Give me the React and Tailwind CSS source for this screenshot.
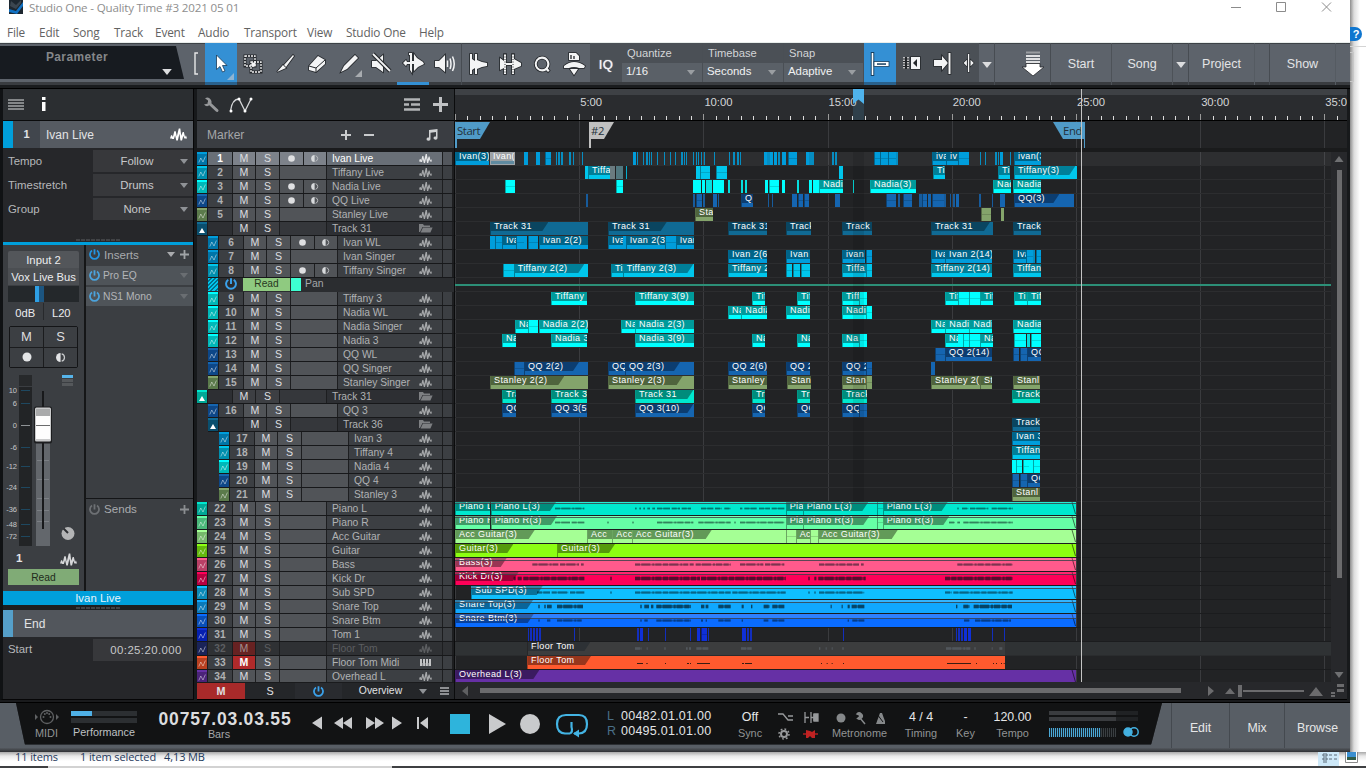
import React from "react";

/* ---------- palette: [clip body, clip label, header chip] ---------- */
const C = {
  ivan: ["#009ddb", "#006488", "#0075a8"],
  tiff: ["#00c6ec", "#007f98", "#008fae"],
  nadia: ["#00ffff", "#009a9a", "#00b8b8"],
  qq: ["#1565b0", "#0c3d70", "#0d4788"],
  stan: ["#84a46b", "#4f643d", "#5b7a4b"],
  fold: ["#106a94", "#0a4560", "#0a4f6e"],
  fold2: ["#00e8cf", "#008c7c", "#00a896"],
  pianoR: ["#66ffa6", "#3f9a66", "#4bb87a"],
  acc: ["#a5ff95", "#629a58", "#76b86b"],
  gtr: ["#8cff12", "#559a0b", "#64b80d"],
  bass: ["#ff5a8c", "#993554", "#b84066"],
  kick: ["#ff0058", "#990036", "#b80040"],
  sub: ["#0fc0ff", "#0a7299", "#0b8ab8"],
  top: ["#10a8ff", "#0a6599", "#0b79b8"],
  btm: ["#0a6cff", "#08419a", "#084eb8"],
  tom: ["#0f30d8", "#0a2090", "#0520b0"],
  mute: ["#3c3d3e", "#2d3135", "#1a2358"],
  floor: ["#ff5a2e", "#98361c", "#b84020"],
  over: ["#6630a5", "#3b1b60", "#4b2379"],
};

/* Clip positions are in thirds of a pixel from the left edge of the arrangement. */
const ROWS = [
  { n: 1, name: "Ivan Live", c: "ivan", rec: 1, sel: 1, clips: [[0, 103, "Ivan(3)"], [207, 218], [243, 255], [270, 288], [303, 306], [309, 315], [318, 324], [342, 348], [354, 357], [381, 384], [534, 543], [546, 549], [564, 567], [573, 579], [582, 585], [588, 591], [606, 609], [627, 630], [645, 648], [660, 663], [678, 684], [687, 690], [693, 696], [714, 717], [723, 726], [729, 732], [738, 741], [747, 750], [777, 780], [822, 825], [834, 840], [846, 852], [855, 858], [927, 936], [937, 945], [946, 955], [956, 966], [969, 975], [981, 993], [999, 1025], [1053, 1062], [1063, 1070], [1071, 1077], [1131, 1137], [1140, 1146], [1257, 1274], [1275, 1298], [1299, 1322], [1323, 1329], [1431, 1472, "iva"], [1473, 1510, "iv"], [1510, 1542], [1575, 1578], [1590, 1593], [1620, 1626], [1629, 1631], [1635, 1644], [1665, 1668], [1677, 1758, "ivan(3)"]] },
  { n: 2, name: "Tiffany Live", c: "tiff", clips: [[390, 399], [399, 465, "Tiffa"], [513, 516], [723, 734], [735, 764], [783, 816], [1152, 1164], [1434, 1470, "Ti"], [1629, 1665, "Ti"], [1677, 1865, "Tiffany(3)", 1858]] },
  { n: 3, name: "Nadia Live", c: "nadia", rec: 1, clips: [[150, 180], [483, 504], [714, 726], [727, 738], [741, 750], [753, 761], [763, 771], [774, 783], [784, 795], [796, 807], [819, 825], [858, 864], [870, 876], [930, 940], [941, 972], [981, 990], [1026, 1032], [1062, 1072], [1073, 1082], [1083, 1092], [1092, 1164, "Nadia"], [1194, 1197], [1245, 1383, "Nadia(3)"], [1614, 1667, "Nad"], [1674, 1758, "Nadia(3)"]] },
  { n: 4, name: "QQ Live", c: "qq", rec: 1, clips: [[393, 399], [714, 720], [723, 741], [744, 750], [774, 786], [789, 792], [858, 894, "Q"], [939, 942], [951, 954], [1011, 1026], [1029, 1045], [1046, 1062], [1140, 1155], [1293, 1323], [1329, 1335], [1344, 1371], [1392, 1400], [1401, 1417], [1419, 1428], [1431, 1466], [1467, 1473], [1485, 1488], [1494, 1500], [1503, 1512], [1572, 1578], [1611, 1614], [1635, 1650], [1677, 1857, "QQ(3)", 1810]] },
  { n: 5, name: "Stanley Live", c: "stan", clips: [[720, 774, "Stan"], [1578, 1608], [1638, 1647]] },
  { name: "Track 31", c: "fold", folder: 1, clips: [[105, 399, "Track 31", 277], [459, 717, "Track 31", 632], [819, 936, "Track 31"], [993, 1068, "Track"], [1161, 1251, "Track"], [1428, 1614, "Track 31", 1602], [1674, 1758, "Track"]] },
  { n: 6, d: 1, name: "Ivan WL", c: "ivan", rec: 1, clips: [[105, 119], [120, 141], [141, 182, "Iva"], [182, 206], [207, 217], [218, 250], [251, 399, "Ivan 2(2)"], [459, 503, "Iva"], [503, 512], [512, 630, "Ivan 2(3)"], [630, 662], [662, 717, "Ivan"]] },
  { n: 7, d: 1, name: "Ivan Singer", c: "ivan", clips: [[819, 936, "Ivan 2(6)"], [993, 1065, "Ivan"], [1161, 1231, "ivan"], [1232, 1251], [1428, 1470, "Iva"], [1470, 1611, "Ivan 2(14)"], [1674, 1713, "Iva"], [1713, 1734], [1735, 1741], [1742, 1758]] },
  { n: 8, d: 1, name: "Tiffany Singer", c: "tiff", rec: 1, clips: [[144, 176], [176, 399, "Tiffany 2(2)", 385], [468, 503, "Ti"], [503, 717, "Tiffany 2(3)", 712], [819, 936, "Tiffany 2(6)"], [993, 1011], [1014, 1035], [1038, 1065], [1161, 1233, "Tiffa"], [1233, 1251], [1428, 1611, "Tiffany 2(14)"], [1674, 1758, "Tiffany"]] },
  { auto: 1, name: "Pan", clips: [] },
  { n: 9, d: 1, name: "Tiffany 3", c: "nadia", clips: [[288, 396, "Tiffany "], [540, 717, "Tiffany 3(9)"], [891, 930, "Tif"], [1026, 1065, "Tif"], [1161, 1211, "Tiff"], [1212, 1236], [1470, 1508, "Tif"], [1509, 1542], [1543, 1575], [1575, 1614, "Tif"], [1677, 1716, "Ti"], [1716, 1758, "Tiff"]] },
  { n: 10, d: 1, name: "Nadia WL", c: "nadia", clips: [[819, 858, "Na"], [859, 936, "Nadia"], [993, 1065, "Nadia"], [1161, 1232, "Nadi"], [1233, 1251]] },
  { n: 11, d: 1, name: "Nadia Singer", c: "nadia", clips: [[180, 218, "Na"], [219, 250], [251, 399, "Nadia 2(2)"], [498, 539, "Na"], [540, 717, "Nadia 2(3)"], [1428, 1470, "Na"], [1471, 1541, "Nadia"], [1543, 1611, "Nadi"], [1674, 1758, "Nadia"]] },
  { n: 12, d: 1, name: "Nadia 3", c: "nadia", clips: [[141, 183, "Na"], [288, 396, "Nadia 3"], [540, 717, "Nadia 3(9)"], [891, 930, "Na"], [1026, 1065, "Na"], [1161, 1211, "Na"], [1212, 1236], [1470, 1508, "Na"], [1509, 1523], [1525, 1542], [1543, 1574], [1575, 1614, "Na"], [1677, 1714], [1716, 1724], [1727, 1758]] },
  { n: 13, d: 1, name: "QQ WL", c: "qq", clips: [[1440, 1470], [1470, 1611, "QQ 2(14)"], [1674, 1693], [1695, 1716], [1716, 1758, "QQ"]] },
  { n: 14, d: 1, name: "QQ Singer", c: "qq", clips: [[177, 206], [207, 399, "QQ 2(2)", 369], [459, 510, "QQ"], [510, 717, "QQ 2(3)", 672], [819, 936, "QQ 2(6)"], [993, 1065, "QQ 2"], [1161, 1232, "QQ 2"], [1233, 1251], [1428, 1440]] },
  { n: 15, d: 1, name: "Stanley Singer", c: "stan", clips: [[105, 399, "Stanley 2(2)", 325], [459, 717, "Stanley 2(3)", 680], [819, 936, "Stanley"], [996, 1068, "Stan"], [1161, 1232, "Stan"], [1233, 1251], [1428, 1575, "Stanley 2("], [1575, 1611, "St"], [1674, 1754, "Stanl"]] },
  { name: "Track 31", c: "fold2", folder: 1, clips: [[141, 183, "Tra"], [288, 396, "Track 31"], [540, 717, "Track 31", 712], [891, 930, "Tra"], [1026, 1065, "Tra"], [1161, 1236, "Track"], [1671, 1754, "Track"]] },
  { n: 16, d: 1, name: "QQ 3", c: "qq", clips: [[141, 183, "QQ"], [288, 396, "QQ 3(5)"], [540, 717, "QQ 3(10)", 712], [891, 930, "QQ"], [1026, 1065, "QQ"], [1161, 1211, "QQ"], [1212, 1236]] },
  { d: 1, name: "Track 36", c: "fold", folder: 1, clips: [[1671, 1755, "Track"]] },
  { n: 17, d: 2, name: "Ivan 3", c: "ivan", clips: [[1671, 1755, "Ivan 3"]] },
  { n: 18, d: 2, name: "Tiffany 4", c: "tiff", clips: [[1671, 1755, "Tiffany"]] },
  { n: 19, d: 2, name: "Nadia 4", c: "nadia", clips: [[1671, 1682], [1684, 1701], [1703, 1721], [1723, 1733], [1735, 1755]] },
  { n: 20, d: 2, name: "QQ 4", c: "qq", clips: [[1671, 1692], [1694, 1715], [1716, 1755, "QQ"]] },
  { n: 21, d: 2, name: "Stanley 3", c: "stan", clips: [[1671, 1755, "Stanl"]] },
  { n: 22, name: "Piano L", c: "fold2", gain: 1, th: 2, clips: [[0, 105, "Piano L"], [107, 992, "Piano L(3)", 300], [992, 1043, "Pia"], [1043, 1265, "Piano L(3)", 1237], [1265, 1283], [1283, 1864, "Piano L(3)", 1475]], wave: [[300, 388], [540, 545], [553, 558], [565, 570], [577, 585], [592, 600], [606, 645], [650, 675], [680, 708], [738, 775], [780, 800], [808, 827], [855, 862], [868, 905], [912, 945], [950, 988], [1507, 1511], [1521, 1540], [1545, 1600], [1610, 1673]] },
  { n: 23, name: "Piano R", c: "pianoR", gain: 1, th: 2, clips: [[0, 105, "Piano R"], [107, 992, "Piano R(3)", 303], [992, 1043, "Pia"], [1043, 1265, "Piano R(3)", 1240], [1265, 1283], [1283, 1864, "Piano R(3)", 1480]], wave: [[300, 345], [350, 388], [457, 461], [532, 536], [606, 715], [730, 827], [838, 842], [855, 988], [1482, 1500], [1507, 1515], [1525, 1673]] },
  { n: 24, name: "Acc Guitar", c: "acc", clips: [[0, 395, "Acc Guitar(3)", 236], [396, 470, "Acc"], [472, 530, "Acc"], [530, 992, "Acc Guitar(3)", 767], [992, 1022], [1022, 1065, "Ac"], [1065, 1088], [1088, 1864, "Acc Guitar(3)", 1325]] },
  { n: 25, name: "Guitar", c: "gtr", clips: [[0, 305, "Guitar(3)", 172], [306, 1864, "Guitar(3)", 477]] },
  { n: 26, name: "Bass", c: "bass", gain: 1.5, th: 2.5, clips: [[0, 1864, "Bass(3)", 152]], wave: [[232, 310], [315, 372], [378, 386], [540, 700], [704, 716], [722, 827], [855, 925], [930, 988], [1092, 1212], [1218, 1226], [1507, 1673]] },
  { n: 27, name: "Kick Dr", c: "kick", gain: 2, th: 4, clips: [[0, 1864, "Kick Dr(3)", 188]], wave: [[176, 182], [188, 200], [205, 388], [466, 470], [540, 735], [738, 992], [1060, 1064], [1078, 1084], [1090, 1232], [1470, 1505], [1507, 1673]] },
  { n: 28, name: "Sub SPD", c: "sub", gain: 2, th: 2.5, clips: [[48, 1864, "Sub SPD(3)", 260]], wave: [[246, 285], [290, 340], [345, 388], [466, 470], [540, 827], [832, 992], [1060, 1064], [1078, 1082], [1092, 1228], [1470, 1490], [1495, 1673]] },
  { n: 29, name: "Snare Top", c: "top", gain: 1.5, th: 4, clips: [[0, 1864, "Snare Top(3)", 231]], wave: [[250, 254], [268, 272], [276, 290], [306, 384], [556, 560], [568, 582], [588, 595], [604, 708], [738, 748], [752, 760], [790, 827], [860, 866], [888, 892], [926, 944], [952, 988], [1127, 1130], [1160, 1163], [1178, 1184], [1190, 1228], [1503, 1507], [1525, 1544], [1556, 1671]] },
  { n: 30, name: "Snare Btm", c: "btm", gain: 4, th: 2.5, clips: [[0, 1864, "Snare Btm(3)", 233]], wave: [[250, 254], [276, 286], [306, 380], [556, 560], [568, 578], [604, 708], [738, 744], [752, 756], [790, 827], [860, 864], [926, 940], [952, 988], [1178, 1182], [1192, 1228], [1527, 1544], [1560, 1668]] },
  { n: 31, name: "Tom 1", c: "tom", clips: [[219, 222], [225, 231], [234, 240], [243, 249], [252, 258], [357, 360], [546, 552], [555, 564], [579, 582], [630, 633], [705, 708], [726, 735], [738, 756], [759, 762], [861, 873], [876, 882], [885, 891], [1164, 1167], [1503, 1506], [1509, 1515], [1518, 1524], [1527, 1536], [1539, 1548], [1611, 1614], [1647, 1650]] },
  { n: 32, name: "Floor Tom", c: "mute", muted: 1, th: 3, clips: [[216, 1650, "Floor Tom", 403]], wave: [[540, 560], [575, 578], [628, 632], [693, 698], [702, 708], [724, 760], [858, 890], [1092, 1096], [1112, 1115], [1130, 1133], [1162, 1166], [1473, 1546], [1558, 1562], [1610, 1613], [1633, 1642]] },
  { n: 33, name: "Floor Tom Midi", c: "floor", m: 1, midi: 1, clips: [[216, 1650, "Floor Tom", 405]], notes: [[546, 564], [574, 578], [630, 633], [696, 702], [705, 708], [726, 765], [861, 867], [870, 891], [1098, 1101], [1115, 1118], [1130, 1133], [1164, 1167], [1476, 1548], [1563, 1566], [1614, 1617], [1623, 1626], [1638, 1641], [1646, 1649]] },
  { n: 34, name: "Overhead L", c: "over", clips: [[0, 1864, "Overhead L(3)", 250]] },
];

/* ---------- small drawings ---------- */
const Spikes = ({ w = 13, h = 9, className = "" }) => (
  <svg width={w} height={h} viewBox="0 0 13 9" className={className} fill="currentColor">
    <path d="M0 7.500L.8 5H1.600L2.200 6.500L3.300 2H4.400L5.200 6L6.700 0H7.900L8.600 5.500L9.700 2.500H10.600L11.500 6.500L12.200 5L13 7.500H11L10.200 5.500L9.200 9H8L7.200 4L6 9H4.800L3.900 5L3 8H1.800L1.200 7.500Z" />
  </svg>
);
const Zig = () => (
  <svg width="8" height="9" viewBox="0 0 8 9" className="mb-px" fill="none" stroke="#ffffff" strokeOpacity=".5" strokeWidth=".9">
    <path d="M.8 7.500L2.800 3L5 7L7.400 1.500" />
  </svg>
);
const Folder = () => (
  <svg width="14" height="9" viewBox="0 0 14 9" fill="#7d7f82">
    <path d="M0 8V0H4L5 1.500H11V3H3.500L1 8Z" /><path d="M4 3.600H13.600L11.400 8.600H1.600Z" />
  </svg>
);
const Keys = () => (
  <svg width="11" height="8" viewBox="0 0 11 8" fill="#c3c4c6"><path d="M0 0H2V4H3V0H5V4H6V0H8V4H9V0H11V7H0Z" /><path d="M2.700 4V7M5.500 4V7M8.300 4V7" stroke="#404246" strokeWidth=".6" /></svg>
);
const Caret = ({ w = 8, h = 5, className = "text-[#8f9296]" }) => (
  <svg width={w} height={h} viewBox="0 0 8 5" className={"shrink-0 " + className} fill="currentColor"><path d="M0 0H8L4 5Z" /></svg>
);
const Power = ({ s = 11, className }) => (
  <svg width={s} height={s} viewBox="0 0 11 11" className={"shrink-0 " + className} fill="none" stroke="currentColor" strokeWidth="1.800">
    <path d="M3 1.600A4.500 4.500 0 1 0 8 1.600M5.500 .3V5.400" />
  </svg>
);
const Plus = ({ s = 9, w = 2, className = "" }) => (
  <svg width={s} height={s} viewBox="0 0 10 10" className={"shrink-0 " + className} stroke="currentColor" strokeWidth={w}><path d="M5 0V10M0 5H10" /></svg>
);
const Dot = () => <svg width="7" height="7" viewBox="0 0 8 8"><circle cx="4" cy="4" r="3.800" fill="#dfe0e2" /></svg>;
const Mon = () => (
  <svg width="8" height="7" viewBox="0 0 8 8"><path d="M3.600 0A4 4 0 0 0 3.600 8Z" fill="#d8dadc" /><path d="M4.600 .8A3.300 3.300 0 0 1 4.600 7.200" fill="none" stroke="#b8babd" strokeWidth="1.100" /></svg>
);
const Grip = () => <div className="h-[2px] w-[44px] bg-[repeating-linear-gradient(90deg,#414346_0_4px,transparent_4px_5px)]" />;

const Ic = ({ children, w = 32 }) => (
  <div className="flex h-full shrink-0 items-center justify-center" style={{ width: w }}>
    <svg width="26" height="26" viewBox="0 0 26 26" fill="#f3f4f5" stroke="#24272b" strokeWidth="1.600" style={{ paintOrder: "stroke" }}>{children}</svg>
  </div>
);

/* ---------- title + menu ---------- */
const MENU = [["File", 32], ["Edit", 34], ["Song", 41], ["Track", 41], ["Event", 43], ["Audio", 46], ["Transport", 63], ["View", 39], ["Studio One", 73], ["Help", 40]];
function TitleBar() {
  return (
    <div className="h-[43px] bg-white font-['Open_Sans'] text-[12px]">
      <div className="flex h-[23px] text-[#8e8e8e]">
        <svg width="14" height="14" viewBox="0 0 14 14" className="ml-[9px]"><path d="M0 0H14V14H0Z" fill="#1d2730" /><path d="M0 9L7 11L14 2V6L8 14L0 12Z" fill="#1272c4" /><path d="M2 1L7 5L12 0V3L7 9L1 6Z" fill="#3b4650" /></svg>
        <div className="ml-[6px] grow text-[11.600px] leading-[15px] tracking-[-.18px]">Studio One - Quality Time #3 2021 05 01</div>
        <svg width="120" height="14" viewBox="0 0 120 14" className="shrink-0" fill="none" stroke="#8b8b8b"><path d="M1 7.500H11M46.500 2.500H55.500V11.500H46.500ZM92 2.500L101 11.500M101 2.500L92 11.500" /></svg>
      </div>
      <div className="flex h-[19px] pl-[7px] text-[11.800px] leading-[18px] tracking-[-.15px] text-[#626262]">
        {MENU.map(([t, w]) => <div key={t} className="shrink-0 whitespace-nowrap" style={{ width: w }}>{t}</div>)}
      </div>
      <div className="h-px bg-[#e8edeb]" />
    </div>
  );
}

/* ---------- toolbar ---------- */
const Pick = ({ label, value, w }) => (
  <div className="flex flex-col border-r border-[#4a4f55]" style={{ width: w }}>
    <div className="h-[20px] pl-[5px] text-[11.200px] leading-[21px] text-[#d3d5d7]">{label}</div>
    <div className="flex h-[19px] items-center justify-between bg-[#5a6067] pl-[4px] pr-[7px] text-[11.400px] text-[#f1f2f3]"><span className="pb-[2px] leading-[17px]">{value}</span><Caret className="text-[#9a9ea2]" /></div>
  </div>
);
function Toolbar() {
  return (
    <div className="flex h-[42px] shrink-0 bg-[linear-gradient(#3d4247_0_1px,#5d636b_1px_39px,#393c40_39px)] text-[#e3e4e6]">
      <div className="flex w-[205px] shrink-0 pt-[3px]">
        <div className="flex h-[33px] w-[185px] bg-[#171b20] [clip-path:polygon(0_0,176px_0,184px_100%,0_100%)]">
          <div className="w-[154px] text-center text-[11.900px] font-bold leading-[22px] tracking-[.45px] text-[#85878a]">Parameter</div>
          <Caret w={10} h={6} className="ml-[8px] mt-[23px] text-[#dcdddf]" />
        </div>
        <svg width="8" height="24" viewBox="0 0 8 24" className="ml-[8px] mt-[6px]" fill="none" stroke="#e7e8e9" strokeWidth="1.400"><path d="M5 1H2V22H5" /></svg>
      </div>
      <div className="flex w-[32px] items-center justify-center bg-[linear-gradient(#3490d4_0_39px,#2a618c_39px)]">
        <svg width="32" height="42" viewBox="0 0 32 42"><path d="M11.500 12V26.500L15 23.500L17.500 29L20 28L17.500 22.500H22Z" fill="#fff" stroke="#1b3a55" strokeWidth=".8" /><path d="M29 30V37H22Z" fill="#8fb4d2" /></svg>
      </div>
      <Ic><g fill="none" stroke="#24272b" strokeWidth="3"><rect x="5" y="5" width="10" height="10" /><rect x="11" y="11" width="10" height="10" /></g><g fill="none" stroke="#f3f4f5" strokeWidth="1.300" strokeDasharray="2 1"><rect x="5" y="5" width="10" height="10" /><rect x="11" y="11" width="10" height="10" /></g><rect x="11.500" y="11.500" width="4" height="4" stroke="none" /></Ic>
      <Ic><path d="M21 4L12 14L14 16L22 5ZM11 14L5 21L14 17Z" /></Ic>
      <Ic><path d="M5 15L14 5L21 9L21 13L12 21L5 19Z" /><path d="M5 15L12 17L21 9M12 17V21" fill="none" strokeWidth="1" /></Ic>
      <Ic><path d="M19 4L22 7L11 18L5 21L8 15Z" /><path d="M26 19V26H19Z" fill="#a8acb0" stroke="none" /></Ic>
      <Ic><path d="M4 10H8L15 4V21L8 16H4Z" /><path d="M5 3L22 20" strokeWidth="4" /><path d="M5 3L22 20" stroke="#f3f4f5" strokeWidth="1.800" /></Ic>
      <div className="flex flex-col">
        <div className="h-[39px]"><Ic><path d="M9 3H12V11H14V4L17 8L23 12L24 14L18 17L14 21V14H12V23L10 20V14H7L6 16L3 13L6 10L7 12H10V5H9Z" /></Ic></div>
        <div className="h-[3px] bg-[#3490d4]" />
      </div>
      <Ic><path d="M3 10H7L13 4V21L7 16H3Z" /><path d="M15.500 9.500V16M18 7.500Q20 13 18 18M20.500 5.500Q24 13 20.500 20" fill="none" stroke="#f3f4f5" strokeWidth="1.500" /></Ic>
      <div className="w-px bg-[#474c52]" />
      <Ic><path d="M5 3H7V8L10 10V3H12V9L17 11L22 12V15L17 16L12 18V23H10V17L7 19V23H5Z" /></Ic>
      <Ic><path d="M3 7L7 10V3H9V12H15V3H17V8L24 12V15L17 18V23H15V14H9V23H7V17L3 19Z" /><path d="M8 3V23M16 3V23" fill="none" strokeDasharray="1 1.500" strokeWidth="1" /></Ic>
      <Ic><path d="M13 5.500A7.500 7.500 0 1 0 17.300 19.300L19 21L20.600 19.400L18.800 17.600A7.500 7.500 0 0 0 13 5.500ZM13 7.700A5.300 5.300 0 1 1 13 18.300A5.300 5.300 0 0 1 13 7.700Z" fillRule="evenodd" /></Ic>
      <Ic><path d="M8 2H15L18 5V9H8ZM3 15Q8 11 13 11Q19 11 24 15L23 17H18Q13 15 8 17H3ZM9 18H17L13 24Z" /><path d="M10 4V8M13 5V8" fill="none" strokeWidth="1.300" /></Ic>
      <div className="flex h-[39px] w-[274px] shrink-0 bg-[#4b5056]">
        <div className="flex w-[32px] items-center justify-center pt-[4px] text-[13px] tracking-[.3px] text-[#f2f3f5] [text-shadow:0_0_1px_#fff]">IQ</div>
        <Pick label="Quantize" value="1/16" w={81} />
        <Pick label="Timebase" value="Seconds" w={81} />
        <Pick label="Snap" value="Adaptive" w={80} />
      </div>
      <div className="flex w-[32px] items-center justify-center bg-[linear-gradient(#3490d4_0_39px,#2a618c_39px)]">
        <svg width="20" height="26" viewBox="0 0 20 26"><path d="M2.500 1V25M3 12.500H18" stroke="#163f60" strokeWidth="3.500" /><path d="M2.500 2V24" stroke="#fff" strokeWidth="1.600" /><rect x="4" y="10.500" width="15" height="5" fill="#fff" stroke="#163f60" strokeWidth=".8" /><rect x="7" y="12.300" width="9" height="1.500" fill="#163f60" /></svg>
      </div>
      <div className="flex h-[39px] w-[83px] shrink-0 bg-[#4b5056]">
        <Ic w={30}><path d="M13 7H22V19H13Z" /><path d="M19 9V17L15 13Z" fill="#24272b" stroke="none" /><path d="M5 7H11V19H5Z" fill="#24272b" stroke="none" /><path d="M6 7V19M10 7V19" stroke="#f3f4f5" strokeWidth="1.500" strokeDasharray="1.500 1" /></Ic>
        <Ic w={32}><path d="M5 10H13V6L19 13L13 20V16H5Z" /><path d="M19.500 3H21.500V24H19.500Z" /></Ic>
        <Ic w={21}><path d="M12.300 2H13.900V24H12.300ZM11 9V17L7 13ZM15.500 9V17L19.500 13Z" /></Ic>
      </div>
      <div className="flex w-[16px] items-center justify-center border-r border-[#474c52] pt-[2px]"><Caret w={10} h={6} className="text-[#dcdddf]" /></div>
      <div className="flex w-[56px] items-center justify-end border-r border-[#474c52] pr-[5px]">
        <svg width="24" height="26" viewBox="0 0 24 26"><path d="M5 1.500H19" stroke="#9a9da1" strokeWidth="2" /><path d="M5 5H19M5 8H19M5 11H19" stroke="#dfe0e2" strokeWidth="2" /><path d="M5 12.500H19V16H23L12 25L1 16H5Z" fill="#fff" stroke="#24272b" strokeWidth=".8" /></svg>
      </div>
      {["Start", "Song"].map((t) => <div key={t} className="w-[61px] border-r border-[#4d5258] text-center text-[12.500px] leading-[42px]">{t}</div>)}
      <div className="flex w-[16px] items-center justify-center border-r border-[#474c52] pt-[2px]"><Caret w={10} h={6} className="text-[#dcdddf]" /></div>
      <div className="w-[66px] border-r border-[#555b62] text-center text-[12.500px] leading-[42px]">Project</div>
      <div className="w-[15px] border-r border-[#474c52]" />
      <div className="w-[66px] border-r border-[#555b62] text-center text-[12.500px] leading-[42px]">Show</div>
    </div>
  );
}

/* ---------- inspector ---------- */
const Field = ({ label, value, caret }) => (
  <div className="mb-[2px] flex h-[22px] items-center">
    <div className="w-[90px] pl-[5px] pt-px text-[11.400px] text-[#b6b8ba]">{label}</div>
    <div className="flex h-[22px] grow items-center bg-[#37383b] pr-[5px] text-[11.400px] text-[#c7c8ca]">
      <div className="grow pl-px pt-px text-center">{value}</div>{caret && <Caret />}
    </div>
  </div>
);
const Insert = ({ name }) => (
  <div className="mb-[2px] flex h-[19px] items-center bg-[#4f5459] pl-[3px] pr-[5px] text-[10.300px] text-[#b3b5b8]">
    <Power className="mr-[3px] text-[#4ba3dd]" /><div className="grow">{name}</div><Caret className="text-[#6a6e72]" />
  </div>
);
const SCALE = [[10, 391], [6, 404], [0, 426], [-6, 448], [-12, 467], [-24, 488], [-36, 510], [-48, 525], [-72, 537]];
function Fader() {
  return (
    <div className="flex h-[176px] shrink-0 pt-[4px]">
      <svg width="80" height="172" viewBox="0 372 80 172" className="shrink-0 overflow-visible" fontFamily="Liberation Sans" fontSize="7.500">
        <path d="M16 375H29V386H16Z" fill="#27292b" /><path d="M16 387H29V546H16Z" fill="#222426" />
        {SCALE.map(([v, y]) => (
          <g key={v}><text x="14" y={y + 2} textAnchor="end" fill="#c6c8ca">{v}</text><path d={`M18 ${y - .5}H27`} stroke={v ? "#1e4860" : "#8f9396"} /></g>
        ))}
        <path d="M33 435H47V546H33Z" fill="#63676c" /><path d="M34 460.500H46M34 479.500H46M34 498.500H46M34 510.500H46M34 521.500H46" stroke="#7b7f84" />
        <path d="M40 391V529" stroke="#18191b" strokeWidth="2" />
        <rect x="31" y="406.500" width="18" height="37" rx="2" fill="#1c1d1f" /><rect x="32" y="407.500" width="16" height="34" rx="1.500" fill="#c9cacb" />
        <rect x="33" y="412" width="14" height="27" fill="#fdfdfd" /><rect x="33" y="409" width="14" height="7" fill="#a9aaab" /><path d="M33 425.500H47" stroke="#6a6b6c" />
        <path d="M59 375H70V378H59Z" fill="#56b4ea" /><path d="M59 379H70V382H59ZM59 383H70V386H59Z" fill="#55585b" />
        <circle cx="65" cy="533.500" r="6.500" fill="#b3b4b5" /><path d="M65 533L60.500 528.500" stroke="#2d2f32" strokeWidth="2" />
      </svg>
    </div>
  );
}
function Inspector() {
  return (
    <div className="flex w-[194px] shrink-0 flex-col border border-l-[3px] border-r-[1px] border-t-0 border-[#060607] border-l-[#101214] bg-[#26272a]">
      <div className="flex h-[31px] shrink-0 items-center bg-[#2b2e31] pl-[5px]">
        <svg width="16" height="11" viewBox="0 0 16 11" stroke="#a3a5a7" strokeWidth="1.700"><path d="M0 1H16M0 4H16M0 7H16M0 10H16" /></svg>
        <svg width="4" height="15" viewBox="0 0 4 15" className="ml-[18px]" fill="#fff"><path d="M0 0H3.500V3H0ZM0 5H3.500V14H0Z" /></svg>
      </div>
      <div className="h-px shrink-0 bg-[#0a0b0c]" />
      <div className="flex h-[27px] shrink-0 items-center bg-[#565b62] text-[#e2e3e5]">
        <div className="h-full w-[10px] bg-[#009fdb]" />
        <div className="flex h-full w-[27px] items-center justify-center bg-[#41464d] text-[11px] font-bold">1</div>
        <div className="grow pl-[6px] text-[12px]">Ivan Live</div>
        <Spikes w={17} h={13} className="mr-[6px] text-white" />
      </div>
      <div className="h-[92px] shrink-0 pt-[2px]">
        <Field label="Tempo" value="Follow" caret /><Field label="Timestretch" value="Drums" caret /><Field label="Group" value="None" caret />
      </div>
      <div className="flex h-[1px] shrink-0 justify-center overflow-visible"><div className="-mt-px"><Grip /></div></div>
      <div className="mt-[1px] h-[3px] shrink-0 bg-[#009fdb]" />
      <div className="flex h-[346px] shrink-0 bg-[#3b3e42]">
        <div className="flex w-[83px] shrink-0 flex-col border-r-2 border-[#151617] bg-[#3b3e42]">
          <div className="mx-[5px] mt-[6px] h-[17px] shrink-0 rounded-t-[2px] bg-[#53565a] text-center text-[11.300px] leading-[18px] text-[#ececee]">Input 2</div>
          <div className="mx-[5px] h-[17px] shrink-0 whitespace-nowrap bg-[#4b4e52] text-center text-[11.200px] leading-[18px] text-[#ececee]">Vox Live Bus</div>
          <div className="mx-[5px] mt-px flex h-[16px] shrink-0 bg-[#24282b]"><div className="ml-[27px] w-[4px] bg-[#2e9fe4]" /><div className="w-[5px] bg-[#1c5580]" /></div>
          <div className="mx-[5px] mt-px flex h-[17px] shrink-0 text-[11.200px] leading-[21px] text-[#ececee]"><div className="w-1/2 border-r border-[#27292c] text-center">0dB</div><div className="w-1/2 text-center">L20</div></div>
          <div className="mx-[6px] mt-[6px] grid h-[42px] shrink-0 grid-cols-2 grid-rows-2 gap-px rounded-[2px] border border-[#141517] bg-[#1b1c1e] text-[13px] text-[#dcdddf] [&>div]:flex [&>div]:items-center [&>div]:justify-center [&>div]:bg-[#3c3f43]">
            <div>M</div><div>S</div><div><svg width="10" height="10"><circle cx="5" cy="5" r="4.500" fill="#e4e5e7" /></svg></div><div><svg width="10" height="9" viewBox="0 0 8 8"><path d="M3.600 0A4 4 0 0 0 3.600 8Z" fill="#e4e5e7" /><path d="M4.600 .8A3.300 3.300 0 0 1 4.600 7.200" fill="none" stroke="#c8cacc" strokeWidth="1.100" /></svg></div>
          </div>
          <Fader />
          <div className="mt-[6px] flex h-[18px] shrink-0 items-center justify-between pl-[13px] pr-[7px] text-[11.500px] font-bold text-[#e4e5e7]">1<Spikes w={17} h={13} className="text-[#d6d7d9]" /></div>
          <div className="mx-[5px] mt-[1px] h-[16px] shrink-0 bg-[#80ab76] text-center text-[10.300px] leading-[17px] text-[#1f2b1c]">Read</div>
        </div>
        <div className="flex grow flex-col">
          <div className="flex h-[21px] shrink-0 items-center pb-[2px] pl-[3px] pr-[4px] text-[11.600px] text-[#a9abae]"><Power className="mr-[4px] text-[#2394e0]" /><div className="grow">Inserts</div><Caret className="mr-[5px]" /><Plus className="text-[#a0a3a6]" /></div>
          <Insert name="Pro EQ" /><Insert name="NS1 Mono" />
          <div className="h-[191px] border-b border-[#141517]" />
          <div className="flex h-[20px] items-center pl-[3px] pr-[4px] text-[11.600px] text-[#a9abae]"><Power className="mr-[4px] text-[#6d7074]" /><div className="grow">Sends</div><Plus className="text-[#8b8e91]" /></div>
        </div>
      </div>
      <div className="h-[14px] shrink-0 bg-[#009fdb] text-center text-[11.400px] leading-[14px] text-[#e6f5fc]">Ivan Live</div>
      <div className="flex h-[5px] shrink-0 items-center justify-center bg-[#1d1e20]"><Grip /></div>
      <div className="flex h-[27px] shrink-0 items-center bg-[#52565c] text-[12px] text-[#e2e3e5]"><div className="h-full w-[10px] bg-[#559fc9]" /><div className="pl-[11px]">End</div></div>
      <div className="pt-[2px]">
        <div className="flex h-[22px] items-center text-[11.400px]"><div className="w-[90px] pl-[5px] text-[#b6b8ba]">Start</div><div className="h-full grow bg-[#37383b] pl-[6px] text-center leading-[22px] tracking-[.4px] text-[#c7c8ca]">00:25:20.000</div></div>
      </div>
    </div>
  );
}

/* ---------- track list ---------- */
function TrackRow({ r }) {
  if (r.auto)
    return (
      <div className="flex h-[14px] shrink-0 bg-[#2b2d30] pl-[11px]">
        <div className="h-[13px] w-[10px] bg-[repeating-linear-gradient(135deg,#00c6ec_0_1.5px,#00708c_1.5px_3px)]" />
        <div className="flex w-[25px] items-start justify-center"><Power s={12} className="text-[#3aa1ea]" /></div>
        <div className="h-[13px] w-[47px] bg-[#8fca80] text-center text-[10.200px] leading-[12px] text-[#28371f]">Read</div>
        <div className="ml-px h-[13px] w-[10px] bg-[#3dffd2]" />
        <div className="pl-[4px] text-[10.400px] leading-[12px] text-[#a5a7aa]">Pan</div>
      </div>
    );
  const [hi, , chip] = C[r.c];
  const bg = r.sel ? "bg-[#696f77]" : r.muted ? "bg-[#2f3134]" : r.folder ? "bg-[#2d2f33]" : "bg-[#3c3f43]";
  const btn = r.sel ? "bg-[#7d828a]" : r.muted ? "bg-[#2f3134]" : r.folder ? "bg-[#3d3f43]" : "bg-[#515458]";
  const tx = r.sel ? "text-white" : r.muted ? "text-[#5c5e61]" : "text-[#b0b2b4]";
  const mbg = r.m ? "bg-[#b02a2a] font-bold text-white" : r.muted ? "bg-[#672222] text-[#a09090]" : btn;
  return (
    <div className="flex h-[14px] shrink-0 bg-[#2b2d31]" style={{ paddingLeft: (r.d || 0) * 11 }}>
      <div className="flex grow border-b border-[#17181a] bg-[#1d1e20]">
        <div className="mr-px flex h-[13px] w-[10px] shrink-0 items-end justify-center border-t-2" style={{ background: chip, borderColor: r.muted ? chip : hi }}>
          {r.folder ? <svg width="6" height="9" viewBox="0 0 6 9"><path d="M3 2L6 7H0Z" fill="#fff" /></svg> : <Zig />}
        </div>
        <div className={"mr-px w-[24px] shrink-0 text-center text-[10.200px] font-bold leading-[13px] " + bg + " " + tx}>{r.n}</div>
        <div className={"mr-px w-[22px] shrink-0 text-center text-[10.600px] leading-[13px] " + mbg + (r.m || r.muted ? "" : " text-[#dedfe1]")}>M</div>
        <div className={"mr-px w-[23px] shrink-0 text-center text-[10.600px] leading-[13px] " + btn + (r.muted ? " text-[#5c5e61]" : " text-[#dedfe1]")}>S</div>
        {r.rec ? (
          <>
            <div className={"mr-px flex w-[23px] shrink-0 items-center justify-center " + btn}><Dot /></div>
            <div className={"mr-px flex w-[22px] shrink-0 items-center justify-center " + btn}><Mon /></div>
          </>
        ) : <div className={"mr-px w-[46px] shrink-0 " + (r.folder ? "bg-[#35373b]" : btn)} />}
        <div className={"mr-px flex grow items-center justify-between overflow-hidden whitespace-nowrap pl-[5px] text-[10.300px] leading-[14px] " + bg + " " + tx}>
          {r.name}
          <div className={"flex w-[23px] shrink-0 items-center " + (r.muted ? "text-[#5c5e61]" : r.sel ? "text-[#e4e5e7]" : "text-[#a6a8aa]")}>{r.folder ? <Folder /> : r.midi ? <span className="pl-px"><Keys /></span> : <Spikes />}</div>
        </div>
        <div className={"mr-[2px] w-[9px] shrink-0 " + (r.sel ? "bg-[#53575d]" : bg)} />
      </div>
    </div>
  );
}
function TrackList() {
  return (
    <div className="flex w-[258px] shrink-0 flex-col border-r border-[#0b0c0d] bg-[#1a1b1d]">
      <div className="flex h-[32px] shrink-0 items-center border-b border-[#060607] bg-[#2b2e31]">
        <svg width="60" height="20" viewBox="0 0 60 20" fill="none"><path d="M12 8L20 15.500" stroke="#96989a" strokeWidth="3" strokeLinecap="round" /><path d="M8 3.200A4.200 4.200 0 1 1 7 9.500L11 8.500V5.500Z" fill="#96989a" /><path d="M33.500 16Q35 4 42 4L48 16L54 4" stroke="#d4d5d7" strokeWidth="1.300" /><g fill="#fff"><circle cx="34" cy="16" r="1.500" /><circle cx="42" cy="4" r="1.500" /><circle cx="48" cy="16" r="1.500" /><circle cx="54" cy="4" r="1.500" /></g></svg>
        <div className="grow" />
        <svg width="16" height="13" viewBox="0 0 16 13" stroke="#b3b5b7" strokeWidth="2.500"><path d="M0 1.500H16M0 6.500H5M7 6.500H16M0 11.500H16" /></svg>
        <Plus s={15} w={2} className="ml-[13px] mr-[6px] text-[#c0c2c4]" />
      </div>
      <div className="flex h-[27px] shrink-0 items-center bg-[#3a3d42] pl-[10px] pt-px text-[12px] text-[#a5a7aa]">
        <div className="w-[134px]">Marker</div>
        <Plus s={10} w={2} className="text-[#c9cbcd]" /><div className="ml-[13px] h-[2px] w-[10px] bg-[#c9cbcd]" />
        <svg width="12" height="12" viewBox="0 0 12 12" className="ml-[52px]" fill="#d0d2d4"><path d="M3 1L11.500 0V9A2 1.600 0 1 1 10 7.500V3L4.500 3.700V10A2 1.600 0 1 1 3 8.600Z" /></svg>
      </div>
      <div className="h-[4px] shrink-0" />
      <div className="flex h-[530px] shrink-0 flex-col overflow-hidden">{ROWS.map((r, i) => <TrackRow key={i} r={r} />)}</div>
      <div className="mt-px flex h-[16px] shrink-0 items-center bg-[#242629] text-[10.800px] text-[#e0e1e3]">
        <div className="h-full w-[48px] bg-[#a82a2a] text-center font-bold leading-[16px]">M</div>
        <div className="w-[50px] text-center">S</div>
        <div className="flex h-full w-[47px] items-center justify-center bg-[#292b2f]"><Power className="text-[#3aa1ea]" /></div>
        <div className="w-[77px] text-center text-[10.400px]">Overview</div>
        <Caret /><svg width="9" height="8" viewBox="0 0 9 8" className="ml-[13px]" stroke="#8d8f92" strokeWidth="1.800"><path d="M0 1H9M0 4H9M0 7H9" /></svg>
      </div>
    </div>
  );
}

/* ---------- arrangement ---------- */
const W = 876;
const Clip = ({ c, clip, tail }) => {
  const [a, b, label, le] = clip;
  const w = (b - a) / 3;
  const lw = le ? (le - a) / 3 : w;
  return (
    <div className={"absolute top-0 h-[13px] overflow-hidden" + (w > 5 ? " border-l border-black/35" : "")} style={{ left: a / 3, width: w, background: C[c][0], opacity: !label && w < 3 ? 0.85 : 1 }}>
      {!label && w > 5 && <div className="mt-[6px] h-px bg-black/15" />}
      {label && (
        <div className="h-[9px] overflow-hidden whitespace-nowrap pl-[3px] text-[9px] leading-[9px] tracking-[.4px] text-white" style={{ width: lw, background: C[c][1], clipPath: le ? "polygon(0 0,100% 0,calc(100% - 6px) 100%,0 100%)" : undefined }}>{label}</div>
      )}
      {tail && b === 1864 && <svg width="5" height="13" viewBox="0 0 5 13" className="absolute right-0 top-0"><path d="M1 0L4.500 12" stroke="#000" strokeOpacity=".55" fill="none" /></svg>}
    </div>
  );
};
const Wave = ({ r }) => (
  <svg width={W} height="13" viewBox={`0 0 ${W} 13`} className="absolute left-0 top-0" fill="none" stroke={r.muted ? "#66727a" : "#001018"} strokeOpacity={r.th > 3 ? 0.42 : 0.3}>
    {r.wave.map(([a, b]) => (
      <g key={a}>
        <path d={`M${a / 3} 6.500H${b / 3}`} strokeWidth={Math.max(1, r.th * 0.7)} />
        <path d={`M${a / 3} 6.500H${b / 3}`} strokeWidth={r.th} strokeDasharray="5 1.300 9 2 2 1 6 1.700" />
      </g>
    ))}
  </svg>
);
const GRID = [0, 1, 2, 3, 4, 5, 6, 7].map((i) => Math.round(i * 124.2) + 0.5);
function Lane({ r, i }) {
  return (
    <div className={"relative h-[14px] shrink-0 border-b " + (r.sel ? "border-[#2d2e30] bg-white/[.05]" : r.muted ? "border-[#2a2c2e] bg-[#2f3234]" : i >= 25 ? "border-[#1b1c1e]" : "border-[#2c2d2f]")}>
      {r.auto && <div className="h-[8px] border-b-2 border-[#2c8f77]" />}
      {r.clips.map((c) => <Clip key={c[0]} c={r.c} clip={c} tail={i >= 25} />)}
      {i === 0 && <div className="absolute left-[35px] top-0 h-[13px] w-[25px] overflow-hidden border border-[#a0a4a8] bg-[#5f8aa0]"><div className="h-[8px] bg-[#9da1a4] pl-[2px] text-[9px] leading-[7px] tracking-[.4px] text-white">Ivan(</div></div>}
      {i === 1 && <div className="absolute left-[155px] top-0 flex h-[13px] gap-px"><div className="w-[5px] bg-[#6b7b80]" /><div className="w-[7px] bg-[#51777f]" /></div>}
      {r.gain && <div className="absolute top-0 border-b border-[#333b44]/80 bg-white/15" style={{ height: r.gain + 1, left: r.n === 28 ? 16 : 0, width: r.n === 28 ? 605 : 621 }} />}
      {r.wave && <Wave r={r} />}
      {r.notes && <svg width={W} height="13" viewBox={`0 0 ${W} 13`} className="absolute left-0 top-0">{r.notes.map(([a, b]) => <path key={a} d={`M${a / 3} 7.500H${b / 3}`} stroke="#3a1c12" />)}</svg>}
    </div>
  );
}
function Ruler() {
  const ticks = [];
  for (let k = 0; k < 72; k++) ticks.push(Math.round(k * 12.42) + 0.5);
  return (
    <div className="h-[32px] shrink-0 border-b border-black bg-[linear-gradient(#3e4145_0_6px,#2a2c2f_6px)]">
      <div className="flex h-[25px] overflow-hidden pt-[5px] text-[11.300px] leading-[17px] text-[#d3d5d7]">
        {["", "5:00", "10:00", "15:00", "20:00", "25:00", "30:00", "35:00"].map((t) => <div key={t} className="w-[124.2px] shrink-0 pl-px tracking-[-.05px]">{t}</div>)}
      </div>
      <svg width="892" height="6" viewBox="0 0 892 6" shapeRendering="crispEdges">
        {ticks.map((x) => <path key={x} d={`M${x} 2V6`} stroke="#dcdcdc" />)}
        {GRID.map((x) => <path key={x} d={`M${x} 0V6`} stroke="#9a9a9a" />)}
      </svg>
    </div>
  );
}
const Flag = ({ left, w, color, text, end }) => (
  <div className="absolute top-px h-[26px]" style={{ left, width: w }}>
    <div className={"absolute top-[14px] h-[12px] " + (end ? "right-0 w-px" : "left-0 w-[2px]")} style={{ background: color }} />
    <div className={"h-[17px] font-['Open_Sans'] text-[11.300px] leading-[17px] tracking-[-.4px] text-[#23303a] " + (end ? "pr-[3px] text-right [clip-path:polygon(0_0,100%_0,100%_100%,10px_100%)]" : "pl-[2px] [clip-path:polygon(0_0,100%_0,calc(100%-10px)_100%,0_100%)]")} style={{ background: color }}>{text}</div>
  </div>
);
function Arrangement() {
  return (
    <div className="relative flex grow flex-col overflow-hidden bg-[#27282b]">
      <Ruler />
      <div className="relative h-[27px] shrink-0 bg-[#222325]">
        <svg width={W} height="27" className="block" shapeRendering="crispEdges">{GRID.map((x) => <path key={x} d={`M${x} 0V27`} stroke="#3a3b3e" />)}</svg>
        <Flag left={0} w={35} color="#509bc8" text="Start" />
        <Flag left={134} w={25} color="#c0c0c0" text="#2" />
        <Flag left={598} w={32} color="#509bc8" text="End" end />
      </div>
      <div className="h-[4px] shrink-0 bg-[#1a1b1c]" />
      <div className="flex h-[530px] shrink-0">
        <div className="relative flex w-[876px] shrink-0 flex-col overflow-hidden bg-[#222325]">
          <svg width={W} height="530" className="absolute left-0 top-0" shapeRendering="crispEdges">{GRID.map((x) => <path key={x} d={`M${x} 0V530`} stroke="#3a3b3e" />)}</svg>
          {ROWS.map((r, i) => <Lane key={i} r={r} i={i} />)}
          <div className="absolute left-[398px] top-0 h-[350px] w-[11px] bg-black/10" />
        </div>
        <div className="flex w-[16px] flex-col items-center bg-[#27282b]">
          <svg width="10" height="18" viewBox="0 0 10 18"><path d="M5 4L9.500 10H.5Z" fill="#6f7072" /></svg>
          <div className="h-[408px] w-[5px] bg-[#6b6b6d]" />
          <div className="grow" />
          <svg width="10" height="12" viewBox="0 0 10 12"><path d="M5 8L9.500 2H.5Z" fill="#6f7072" /></svg>
        </div>
      </div>
      <div className="flex h-[18px] items-center">
        <svg width="25" height="14" viewBox="0 0 25 14"><path d="M7 7L13 2V12Z" fill="#5f6062" /></svg>
        <div className="h-[5px] w-[701px] bg-[#6b6b6d]" />
        <svg width="166" height="16" viewBox="0 0 166 16" fill="#6b6b6d"><path d="M27 3L33 8L27 13ZM49 5L54 11H44ZM57 2H61V14H57ZM62 7H123V9H62ZM135 4L142 13H128ZM156 1H163V4H156ZM156 6H163V9H156ZM150 9H154V11H150ZM150 12H154V14H150Z" /></svg>
      </div>
      <div className="absolute left-[398px] top-0 h-[31px] w-[11px] bg-[#4fb3ec]/15"><div className="h-[15px] bg-[#4fb3ec] [clip-path:polygon(0_0,100%_0,100%_100%,50%_70%,0_100%)]" /></div>
      <div className="absolute left-[626px] top-0 h-[593px] w-px bg-[#c4c4c4]" />
    </div>
  );
}

/* ---------- transport ---------- */
const Stack = ({ w, a, b, className = "" }) => (
  <div className={"flex shrink-0 flex-col items-center whitespace-nowrap " + className} style={{ width: w }}>
    <div className="flex h-[17px] items-center text-[12.400px] text-[#e6e7e8]">{a}</div>
    <div className="flex h-[15px] items-center text-[10.900px] text-[#919395]">{b}</div>
  </div>
);
function Transport() {
  return (
    <div className="flex h-[45px] shrink-0 bg-[#585e65]">
      <div className="flex w-[1171px] shrink-0 pl-[16px]">
        <div className="h-[42px] w-[1146px] bg-[#2c2f33] [clip-path:polygon(0_0,100%_0,calc(100%-11px)_100%,9px_100%)]">
          <div className="flex h-[41px] bg-[#121314] pt-[6px]">
            <Stack w={61} a={<svg width="26" height="16" viewBox="0 0 26 16" className="mt-[-2px]" fill="none" stroke="#5f6163" strokeWidth="1.300"><circle cx="13" cy="8" r="6.500" /><g fill="#5f6163" stroke="none"><circle cx="9.500" cy="8" r="1" /><circle cx="10.800" cy="5" r="1" /><circle cx="13" cy="4" r="1" /><circle cx="15.200" cy="5" r="1" /><circle cx="16.500" cy="8" r="1" /><path d="M1 5L4 8L1 11ZM22 5L25 8L22 11Z" /></g></svg>} b="MIDI" />
            <div className="-ml-[6px] flex w-[66px] shrink-0 flex-col items-center gap-[2px] pt-[2px]">
              <div className="h-[5px] w-full bg-[#2c2f32]"><div className="h-full w-[21px] bg-[#4fb0e6]" /></div>
              <div className="h-[5px] w-full bg-[#2c2f32]" />
              <div className="text-[10.800px] leading-[15px] text-[#bfc1c3]">Performance</div>
            </div>
            <div className="ml-[15px] flex w-[146px] shrink-0 flex-col items-center">
              <div className="text-[17.500px] font-bold leading-[20px] tracking-[.8px] text-[#dcdddf]">00757.03.03.55</div>
              <div className="-ml-[12px] text-[10.800px] leading-[11px] text-[#a5a7a9]">Bars</div>
            </div>
            <svg width="290" height="30" viewBox="308 709 290 30" className="ml-[10px] shrink-0" fill="#c9cacc">
              <path d="M322 716.500V729.500L312 723ZM343 717V729L334 723ZM352 717V729L343 723ZM366 717V729L375 723ZM375 717V729L384 723ZM392 716.500V729.500L402 723ZM428 717V729L420 723ZM417 717H419V729H417Z" />
              <path d="M450 714H470V734H450Z" fill="#2eb4dc" /><path d="M489 714L506 724L489 734Z" /><circle cx="530" cy="724" r="10" />
              <path d="M570 733.500H565Q557 733 557 724Q557 715 566 715H579Q587 715 587 724Q587 733 579 733.500H574M570 733.500Q573 732 571.500 727V722" fill="none" stroke="#43b4e4" strokeWidth="2.200" />
              <path d="M573 733.500L579 729.500V737.500Z" fill="#43b4e4" />
            </svg>
            <div className="ml-[9px] flex w-[124px] shrink-0 flex-col text-[12.500px] leading-[15px] text-[#e3e4e6]">
              <div className="flex gap-[6px] tracking-[.25px]"><span className="w-[8px] text-[#4a6f88]">L</span>00482.01.01.00</div>
              <div className="flex gap-[6px] tracking-[.25px]"><span className="w-[8px] text-[#4a6f88]">R</span>00495.01.01.00</div>
            </div>
            <Stack w={38} a="Off" b="Sync" />
            <svg width="52" height="32" viewBox="775 707 52 32" className="ml-[5px] shrink-0" fill="none" stroke="#97999b" strokeWidth="1.300">
              <path d="M779 712H784L789 718H794M789 714H794M806 710V721M806 715.500H810M812 710V721M812 715.500H819M815 712V719" />
              <path d="M815 712H819V719H815Z" fill="#97999b" />
              <circle cx="785" cy="732" r="3" strokeWidth="2" /><circle cx="785" cy="732" r="5" strokeDasharray="1.800 2.100" strokeWidth="1.500" />
              <path d="M804 732H819" stroke="#b02020" strokeWidth="1.500" /><path d="M807 728V736H809L811 734L813 736H816V728L813 730L811 729Z" fill="#c02222" stroke="none" />
            </svg>
            <Stack w={67} a={<svg width="50" height="14" viewBox="0 0 50 14" fill="#85888a"><circle cx="6" cy="7" r="4.500" /><path d="M22 3A3 3 0 1 1 22.500 7.500L24.500 6V4ZM25 7L30 13" stroke="#85888a" strokeWidth="1.500" /><path d="M45 2H47L51 13H41Z" /><path d="M42 3L48 11" stroke="#121314" /></svg>} b="Metronome" />
            <Stack w={56} a="4 / 4" b="Timing" /><Stack w={33} a="-" b="Key" /><Stack w={61} a="120.00" b="Tempo" />
            <div className="ml-[6px] w-[92px] shrink-0 pt-[2px]">
              <div className="mb-[2px] h-[4px] w-[89px] bg-[#202224]"><div className="h-full w-[67px] bg-[#3a3c3f]" /></div>
              <div className="h-[4px] w-[89px] bg-[#202224]"><div className="h-full w-[67px] bg-[#3a3c3f]" /></div>
              <div className="mt-[5px] flex h-[12px] items-center"><div className="h-[9px] w-[52px] bg-[repeating-linear-gradient(90deg,#4ba8d6_0_1px,#16242c_1px_2px)]" /><div className="h-[9px] w-[15px] bg-[repeating-linear-gradient(90deg,#3a3f42_0_1px,#16181a_1px_2px)]" />
                <svg width="17" height="12" viewBox="0 0 17 12" className="ml-[7px]" fill="none" stroke="#43b0e0" strokeWidth="1.500"><circle cx="5" cy="6" r="4" fill="#43b0e0" /><circle cx="11" cy="6" r="4.200" /></svg></div>
            </div>
          </div>
        </div>
      </div>
      {[["Edit", 58], ["Mix", 55], ["Browse", 66]].map(([t, w]) => <div key={t} className="h-full shrink-0 border-l border-[#44494f] text-center text-[12.300px] leading-[50px] text-[#e6e7e8]" style={{ width: w }}>{t}</div>)}
    </div>
  );
}

export default function App() {
  return (
    <div className="flex h-[768px] w-[1366px] flex-col overflow-hidden bg-white font-['Liberation_Sans',sans-serif]">
      <div className="flex h-[752px] shrink-0">
        <div className="flex w-[1350px] shrink-0 flex-col overflow-hidden bg-[#17191b]">
          <TitleBar />
          <Toolbar />
          <div className="h-[4px] shrink-0 border-b border-black bg-[#1a1c1e]" />
          <div className="flex h-[611px] shrink-0 gap-[3px] bg-[#17191b]">
            <Inspector />
            <div className="flex w-[1150px] border-b border-black"><TrackList /><Arrangement /></div>
          </div>
          <div className="h-[3px] shrink-0 border-b border-black bg-[#1a1b1d]" />
          <Transport />
          <div className="grow bg-[linear-gradient(#54595f,#2e3033)]" />
        </div>
        <div className="w-[16px] bg-[linear-gradient(90deg,#8d8d8d,#dcdcdc_4px,#fff_10px)]">
          <div className="h-[27px]" />
          <div className="flex h-[14px] items-center overflow-hidden"><div className="h-[14px] w-[12px] rounded-r-full bg-[#0f76cf] text-center text-[11px] font-bold leading-[14px] text-white">?</div></div>
          <div className="mt-[5px] h-px bg-[#d4d4d4]" />
          <div className="mt-[5px] h-[30px] w-[4px] border border-l-0 border-[#c8c8c8]" />
        </div>
      </div>
      <div className="flex h-[14px] shrink-0 bg-[linear-gradient(#a9a9a9,#e8e8e8_4px,#fff_9px)] pl-[15px] font-['Open_Sans'] text-[11px] leading-[9px] text-[#1e395b]">
        <div className="w-[65px] tracking-[-.1px]">11 items</div>
        <div className="w-[84px] tracking-[-.1px]">1 item selected</div>
        <div className="grow tracking-[-.1px]">4,13 MB</div>
        <svg width="48" height="14" viewBox="1318 752 48 14" className="shrink-0" fill="none"><path d="M1318 752H1339V766H1318Z" fill="#cde8f8" /><path d="M1323 754H1327V756H1323ZM1323 758H1327V760H1323ZM1329 755H1332M1334 755H1337M1329 759H1332M1334 759H1337M1323 762H1327" stroke="#5b6b78" /><path d="M1345.500 752V762.500H1357.500V752" stroke="#8a8a8a" fill="#fff" /><path d="M1347 752H1356V757H1347Z" fill="#3b8fd0" /><path d="M1347 757H1356V760H1347Z" fill="#2f5c48" /></svg>
      </div>
      <div className="flex h-[2px] shrink-0 bg-[#3f4042]"><div className="ml-[48px] w-[344px] bg-[#d2d2d2]" /></div>
    </div>
  );
}
